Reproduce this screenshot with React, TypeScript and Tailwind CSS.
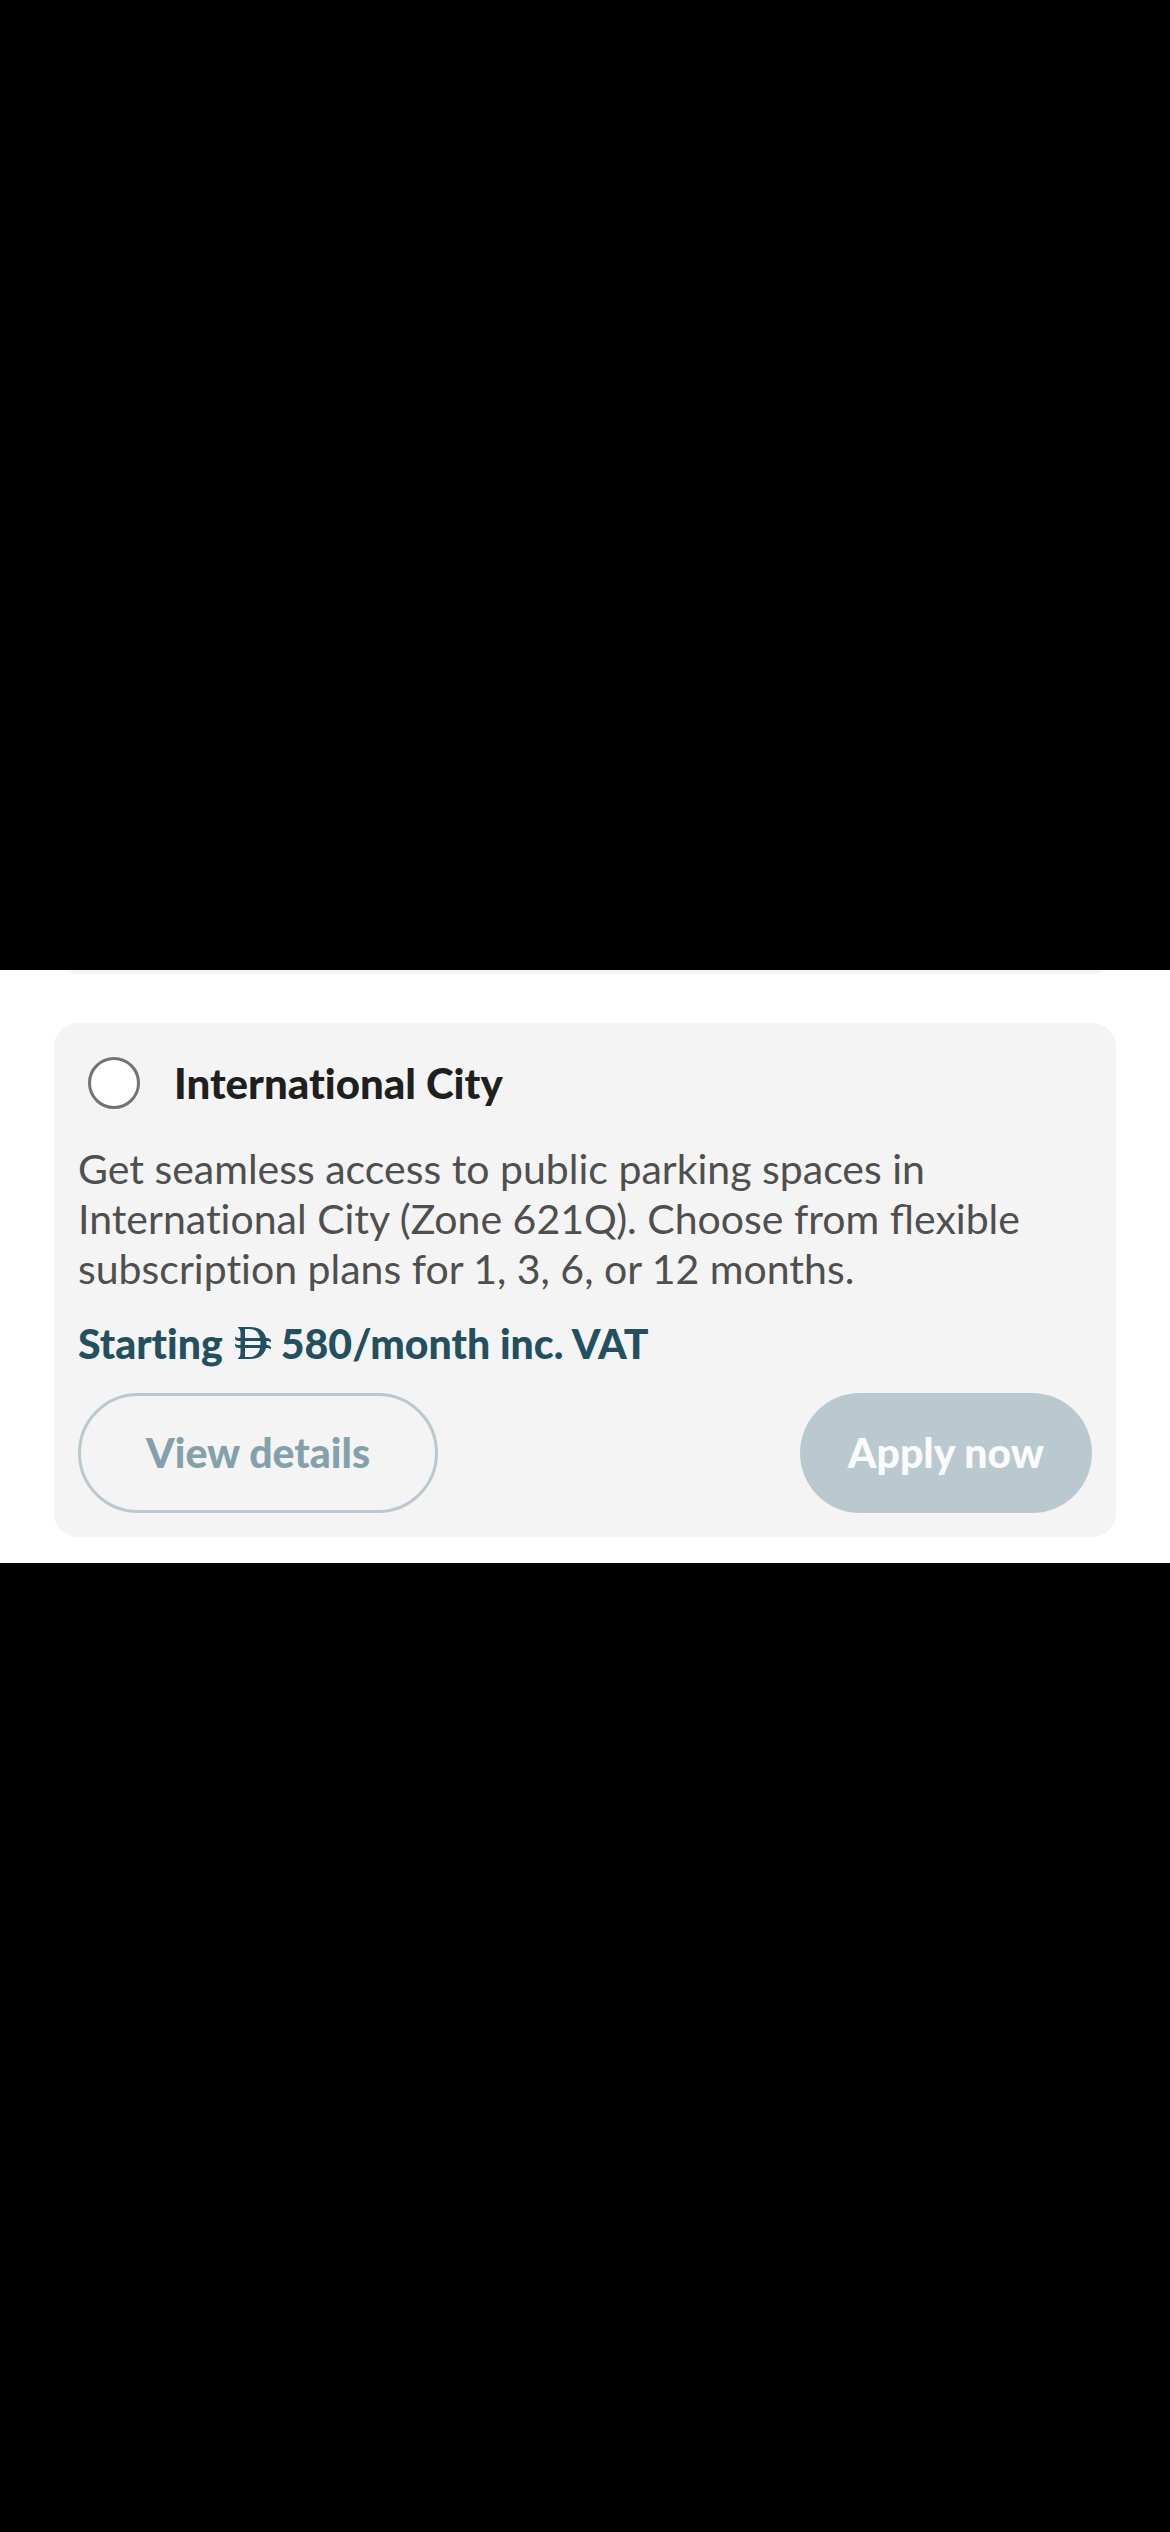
function DirhamSign() {
  return (
    <svg viewBox="0 0 36 32" className="mr-2.5 mb-0.5 ml-3 h-8 w-9" fill="currentColor" role="img" aria-label="AED">
      <path
        fillRule="evenodd"
        d="M3 0H15C26 0 31.500 6 31.500 16S26 32 15 32H3V31C5 30 5.500 28.500 5.500 25V7C5.500 3.500 5 2 3 1Z M10 2V30H14.500C21.500 30 25.500 25 25.500 16S21.500 2 14.500 2Z"
      />
      <path d="M0 9.500C1 10.500 2 11 4 11H32C34 11 35.500 12 36 13.500V15.500C35 14.500 33.500 14 32 14H4C1.500 14 0 13 0 11Z" />
      <path d="M0 16.500C1 17.500 2 18 4 18H32C34 18 35.500 19 36 20.500V22.500C35 21.500 33.500 21 32 21H4C1.500 21 0 20 0 18Z" />
    </svg>
  );
}

export default function App() {
  return (
    <div className="flex min-h-screen flex-col justify-center bg-black font-['Lato',sans-serif] text-[41px] leading-[50px] [font-variant-ligatures:none]">
      <main className="bg-white pb-[26px]">
        <div className="mx-[54px] h-[5px] overflow-hidden">
          <div className="-mt-11 h-12 rounded-[24px] bg-[#f4f4f4]" />
        </div>
        <section className="mx-[54px] mt-12 rounded-[24px] bg-[#f4f4f4] px-6 pt-[34px] pb-6">
          <div className="flex items-center gap-[34px] pl-2.5">
            <input
              id="international-city"
              type="radio"
              name="plan"
              className="size-[52px] shrink-0 appearance-none rounded-full border-[3px] border-[#737373] bg-white checked:border-[16px]"
            />
            <label htmlFor="international-city" className="text-[42px] font-black text-[#1f1f1f]">
              International City
            </label>
          </div>
          <p className="mt-[35px] text-[#4f4f4f]">
            Get seamless access to public parking spaces in
            <br />
            International City (Zone 621Q). Choose from{" "}
            <span className="[font-variant-ligatures:normal]">flexible</span>
            <br />
            subscription plans for 1, 3, 6, or 12 months.
          </p>
          <p className="mt-[25px] flex items-center font-black text-[#22505f]">
            <span>Starting</span>
            <DirhamSign />
            <span>580/month inc. VAT</span>
          </p>
          <div className="mt-6 flex justify-between">
            <button className="h-[120px] rounded-full border-[3px] border-[#bac9cf] px-[65px] font-black text-[#84a1ab]">
              View details
            </button>
            <button className="h-[120px] rounded-full bg-[#bac9cf] px-12 font-black text-[#fafbfc]">Apply now</button>
          </div>
        </section>
      </main>
    </div>
  );
}
